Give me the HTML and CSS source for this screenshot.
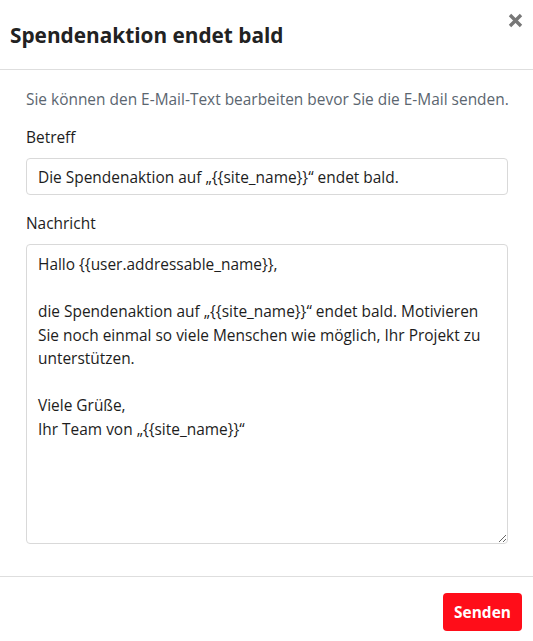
FILE: index.html
```html
<!DOCTYPE html>
<html lang="de">
<head>
    <meta charset="UTF-8">
    <meta name="viewport" content="width=device-width, initial-scale=1.0">
    <title>Spendenaktion endet bald</title>
    <link rel="stylesheet" href="styles.css">
</head>
<body>
    <div class="modal">
        <!-- Kopfzeile -->
        <div class="modal-header">
            <h2 class="modal-title">Spendenaktion endet bald</h2>
            <button class="modal-close" aria-label="Schließen">
                <svg width="15" height="15" viewBox="0 0 15 15">
                    <path d="M2 2 L13 13 M13 2 L2 13" stroke="#777" stroke-width="3.4" stroke-linecap="butt" fill="none"/>
                </svg>
            </button>
        </div>

        <!-- Inhalt -->
        <div class="modal-body">
            <p class="hint">Sie können den E-Mail-Text bearbeiten bevor Sie die E-Mail senden.</p>

            <div class="field">
                <label for="subject">Betreff</label>
                <input type="text" id="subject" value="Die Spendenaktion auf „{{site_name}}“ endet bald.">
            </div>

            <div class="field">
                <label for="message">Nachricht</label>
                <textarea id="message">Hallo {{user.addressable_name}},

die Spendenaktion auf „{{site_name}}“ endet bald. Motivieren Sie noch einmal so viele Menschen wie möglich, Ihr Projekt zu unterstützen.

Viele Grüße,
Ihr Team von „{{site_name}}“</textarea>
            </div>
        </div>

        <!-- Fußzeile -->
        <div class="modal-footer">
            <button class="btn-send">Senden</button>
        </div>
    </div>
</body>
</html>
```

FILE: styles.css
```css
/* Reset */
* {
    margin: 0;
    padding: 0;
    box-sizing: border-box;
}

body {
    font-family: 'Open Sans', 'Noto Sans', sans-serif;
    font-size: 15.45px;
    color: #1d1d1d;
    background: #fff;
}

.modal {
    width: 533px;
    min-height: 641px;
    background: #fff;
}

/* Kopfzeile */
.modal-header {
    height: 70px;
    display: flex;
    justify-content: space-between;
    align-items: flex-start;
    border-bottom: 1px solid #dedede;
    padding: 0 10px 0 10px;
}

.modal-title {
    font-size: 20.8px;
    font-weight: 700;
    color: #222;
    margin-top: 21px;
    line-height: 28px;
}

.modal-close {
    background: none;
    border: none;
    cursor: pointer;
    margin-top: 13px;
    width: 15px;
    height: 15px;
    display: block;
}

.modal-close svg {
    display: block;
}

/* Inhalt */
.modal-body {
    padding: 18px 25px 32px 26px;
}

.hint {
    color: #5b6670;
    line-height: 22px;
    margin-bottom: 16px;
    white-space: nowrap;
}

.field {
    margin-bottom: 17px;
}

.field:last-child {
    margin-bottom: 0;
}

.field label {
    display: block;
    line-height: 22px;
    margin-bottom: 10px;
}

.field input,
.field textarea {
    display: block;
    width: 482px;
    font-family: inherit;
    font-size: 15.45px;
    color: #1d1d1d;
    border: 1px solid #d9d9d9;
    border-radius: 4px;
    padding: 7px 11px;
    line-height: 21px;
    outline: none;
    background: #fff;
}

.field input {
    height: 37px;
}

.field textarea {
    height: 300px;
    line-height: 23.5px;
    padding: 8px 11px;
    resize: vertical;
}

/* Fußzeile */
.modal-footer {
    border-top: 1px solid #dedede;
    display: flex;
    justify-content: flex-end;
    padding: 16px 11px 0 0;
}

.btn-send {
    background: #ff0d19;
    color: #fff;
    border: none;
    border-radius: 4px;
    font-family: inherit;
    font-size: 15.45px;
    font-weight: 700;
    width: 79px;
    height: 38px;
    cursor: pointer;
}
```
